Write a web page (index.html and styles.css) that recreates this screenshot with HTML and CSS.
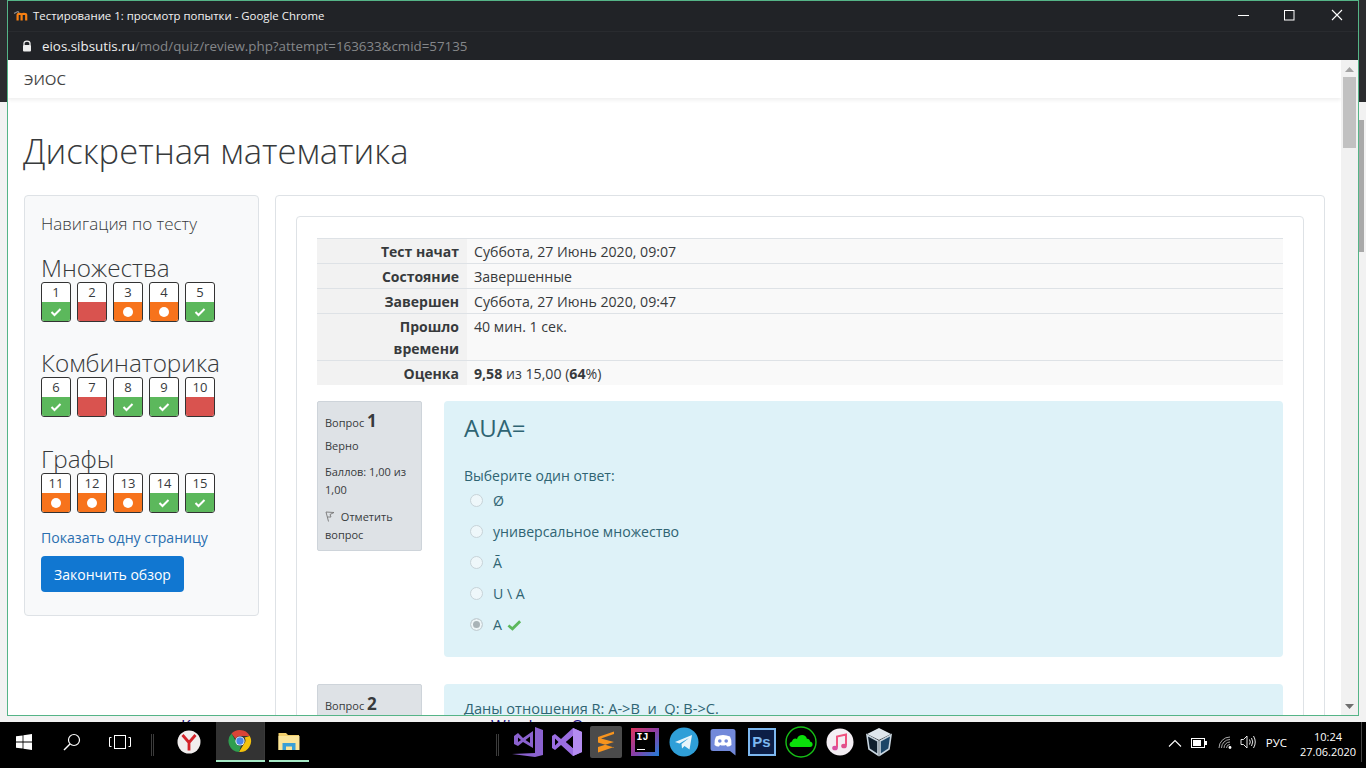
FILE: index.html
```html
<!DOCTYPE html>
<html lang="ru">
<head>
    <meta charset="UTF-8">
    <title>Тестирование 1: просмотр попытки</title>
    <link rel="stylesheet" href="styles.css">
</head>
<body>
    <div class="desktop">
        <div class="behind-right"></div>
        <span class="behind-text behind-k">К</span>
        <span class="behind-text behind-w">Windows О</span>

        <div class="window">
            <div class="titlebar">
                <svg class="moodle-icon" viewBox="0 0 14 10" width="14" height="10">
                    <path d="M0 2.5 L4 0.5 L5 2" fill="none" stroke="#8a8a8a" stroke-width="1.2"/>
                    <path d="M3.6 9.5 V4 C3.6 2.4 7.6 2.4 7.6 4 V9.5 M7.6 4 C7.6 2.4 12.2 2.4 12.2 4 V9.5" fill="none" stroke="#f98012" stroke-width="2.2"/>
                </svg>
                <span class="window-title">Тестирование 1: просмотр попытки - Google Chrome</span>
                <div class="window-controls">
                    <svg viewBox="0 0 46 16" width="46" height="16"><path d="M0 7.5 H11" stroke="#fff" stroke-width="1"/></svg>
                    <svg viewBox="0 0 46 16" width="46" height="16"><rect x="0.5" y="2.5" width="9.5" height="9.5" fill="none" stroke="#fff" stroke-width="1"/></svg>
                    <svg viewBox="0 0 16 16" width="16" height="16"><path d="M2 2 L12 12 M12 2 L2 12" stroke="#fff" stroke-width="1.1"/></svg>
                </div>
            </div>
            <div class="urlbar">
                <svg viewBox="0 0 10 12" width="10" height="12"><path d="M2 5.5 V3.6 C2 0.4 8 0.4 8 3.6 V5.5" fill="none" stroke="#eee" stroke-width="1.3"/><rect x="1" y="5" width="8" height="6.5" rx="1" fill="#eee"/></svg>
                <span class="url"><span class="url-host">eios.sibsutis.ru</span>/mod/quiz/review.php?attempt=163633&amp;cmid=57135</span>
            </div>

            <div class="viewport">
                <div class="page">
                    <div class="navbar">ЭИОС</div>
                    <h1 class="course-title">Дискретная математика</h1>
                    <div class="columns">
                        <div class="nav-block">
                            <div class="nav-title">Навигация по тесту</div>

                            <h3 class="nav-section first">Множества</h3>
                            <div class="nav-row">
                                <div class="qn"><span class="qn-num">1</span><span class="qn-state ok"><svg viewBox="0 0 12 10" width="12" height="10"><path d="M1.5 5 L4.5 8 L10.5 2" fill="none" stroke="#fff" stroke-width="2"/></svg></span></div>
                                <div class="qn"><span class="qn-num">2</span><span class="qn-state bad"></span></div>
                                <div class="qn"><span class="qn-num">3</span><span class="qn-state part"><i class="dot"></i></span></div>
                                <div class="qn"><span class="qn-num">4</span><span class="qn-state part"><i class="dot"></i></span></div>
                                <div class="qn"><span class="qn-num">5</span><span class="qn-state ok"><svg viewBox="0 0 12 10" width="12" height="10"><path d="M1.5 5 L4.5 8 L10.5 2" fill="none" stroke="#fff" stroke-width="2"/></svg></span></div>
                            </div>

                            <h3 class="nav-section">Комбинаторика</h3>
                            <div class="nav-row">
                                <div class="qn"><span class="qn-num">6</span><span class="qn-state ok"><svg viewBox="0 0 12 10" width="12" height="10"><path d="M1.5 5 L4.5 8 L10.5 2" fill="none" stroke="#fff" stroke-width="2"/></svg></span></div>
                                <div class="qn"><span class="qn-num">7</span><span class="qn-state bad"></span></div>
                                <div class="qn"><span class="qn-num">8</span><span class="qn-state ok"><svg viewBox="0 0 12 10" width="12" height="10"><path d="M1.5 5 L4.5 8 L10.5 2" fill="none" stroke="#fff" stroke-width="2"/></svg></span></div>
                                <div class="qn"><span class="qn-num">9</span><span class="qn-state ok"><svg viewBox="0 0 12 10" width="12" height="10"><path d="M1.5 5 L4.5 8 L10.5 2" fill="none" stroke="#fff" stroke-width="2"/></svg></span></div>
                                <div class="qn"><span class="qn-num">10</span><span class="qn-state bad"></span></div>
                            </div>

                            <h3 class="nav-section last">Графы</h3>
                            <div class="nav-row">
                                <div class="qn"><span class="qn-num">11</span><span class="qn-state part"><i class="dot"></i></span></div>
                                <div class="qn"><span class="qn-num">12</span><span class="qn-state part"><i class="dot"></i></span></div>
                                <div class="qn"><span class="qn-num">13</span><span class="qn-state part"><i class="dot"></i></span></div>
                                <div class="qn"><span class="qn-num">14</span><span class="qn-state ok"><svg viewBox="0 0 12 10" width="12" height="10"><path d="M1.5 5 L4.5 8 L10.5 2" fill="none" stroke="#fff" stroke-width="2"/></svg></span></div>
                                <div class="qn"><span class="qn-num">15</span><span class="qn-state ok"><svg viewBox="0 0 12 10" width="12" height="10"><path d="M1.5 5 L4.5 8 L10.5 2" fill="none" stroke="#fff" stroke-width="2"/></svg></span></div>
                            </div>

                            <a class="one-page" href="#">Показать одну страницу</a>
                            <button class="finish-btn" type="button">Закончить обзор</button>
                        </div>

                        <div class="main-block">
                            <div class="review-card">
                                <table class="summary">
                                    <tr><th>Тест начат</th><td>Суббота, 27 Июнь 2020, 09:07</td></tr>
                                    <tr><th>Состояние</th><td>Завершенные</td></tr>
                                    <tr><th>Завершен</th><td>Суббота, 27 Июнь 2020, 09:47</td></tr>
                                    <tr><th>Прошло<br>времени</th><td>40 мин. 1 сек.</td></tr>
                                    <tr><th>Оценка</th><td><b>9,58</b> из 15,00 (<b>64</b>%)</td></tr>
                                </table>

                                <div class="question">
                                    <div class="q-info">
                                        <div class="q-no">Вопрос <b>1</b></div>
                                        <div class="q-line">Верно</div>
                                        <div class="q-line">Баллов: 1,00 из 1,00</div>
                                        <div class="q-line flagged">
                                            <svg class="flag" viewBox="0 0 10 11" width="10" height="11"><path d="M3.5 10.5 L1 1 L9 1.5 L5 3.5 L6 6 L2.5 6" fill="none" stroke="#777" stroke-width="0.9"/></svg>
                                            Отметить вопрос
                                        </div>
                                    </div>
                                    <div class="q-content">
                                        <div class="q-text">AUA=</div>
                                        <div class="q-prompt">Выберите один ответ:</div>
                                        <div class="option"><i class="radio"></i>Ø</div>
                                        <div class="option"><i class="radio"></i>универсальное множество</div>
                                        <div class="option"><i class="radio"></i>Ā</div>
                                        <div class="option"><i class="radio"></i>U \ A</div>
                                        <div class="option"><i class="radio checked"></i>A
                                            <svg class="tick" viewBox="0 0 16 12" width="15" height="12"><path d="M1.5 6.5 L5.8 10 L14 2" fill="none" stroke="#5cb85c" stroke-width="3"/></svg>
                                        </div>
                                    </div>
                                </div>

                                <div class="question">
                                    <div class="q-info">
                                        <div class="q-no">Вопрос <b>2</b></div>
                                    </div>
                                    <div class="q-content short">
                                        <div class="q-relation">Даны отношения R: A-&gt;B &nbsp;и &nbsp;Q: B-&gt;C.</div>
                                    </div>
                                </div>
                            </div>
                        </div>
                    </div>
                </div>
                <div class="scrollbar">
                    <svg class="sb-arrow" viewBox="0 0 9 5" width="9" height="5"><path d="M4.5 0 L9 5 H0 Z" fill="#a3a3a3"/></svg>
                    <div class="sb-thumb"></div>
                    <svg class="sb-arrow sb-down" viewBox="0 0 9 5" width="9" height="5"><path d="M0 0 H9 L4.5 5 Z" fill="#6e6e6e"/></svg>
                </div>
            </div>
        </div>
    </div>

    <div class="taskbar">
        <div class="tb-slot wide">
            <svg viewBox="0 0 16 16" width="16" height="16"><path d="M0 2.3 L6.6 1.4 V7.6 H0 Z M7.4 1.3 L16 0 V7.6 H7.4 Z M0 8.4 H6.6 V14.6 L0 13.7 Z M7.4 8.4 H16 V16 L7.4 14.7 Z" fill="#fff"/></svg>
        </div>
        <div class="tb-slot wide">
            <svg viewBox="0 0 18 18" width="18" height="18"><circle cx="11" cy="7" r="5.5" fill="none" stroke="#fff" stroke-width="1.2"/><path d="M7 11 L1 17" stroke="#fff" stroke-width="1.4"/></svg>
        </div>
        <div class="tb-slot wide">
            <svg viewBox="0 0 22 14" width="22" height="14"><rect x="5.5" y="0.5" width="11" height="13" fill="none" stroke="#fff"/><path d="M2.5 2.5 H0.5 V11.5 H2.5 M19.5 2.5 H21.5 V11.5 H19.5" fill="none" stroke="#fff"/></svg>
        </div>
        <i class="tb-sep first"></i>
        <div class="tb-slot wide">
            <svg viewBox="0 0 24 24" width="24" height="24"><circle cx="12" cy="12" r="11.5" fill="#f1eeee"/><path d="M5.5 5 L12 12.5 L18.5 5 M12 12.5 V20.5" fill="none" stroke="#d3232a" stroke-width="2.8"/></svg>
        </div>
        <div class="tb-slot wide active">
            <svg viewBox="0 0 24 24" width="24" height="24">
                <path d="M12 1 A11 11 0 0 1 21.8 7 L12 7 A5 5 0 0 0 7.5 9.8 L3.5 4.5 A11 11 0 0 1 12 1 Z" fill="#db4437"/>
                <path d="M21.8 7 A11 11 0 0 1 11 23 L16 14.8 A5 5 0 0 0 16.5 8.5 Z" fill="#f4c20d"/>
                <path d="M3.5 4.5 L8 12.5 A5 5 0 0 0 13 17 L11 23 A11 11 0 0 1 3.5 4.5 Z" fill="#2f9e4f"/>
                <circle cx="12" cy="12" r="4.6" fill="#fff"/><circle cx="12" cy="12" r="3.7" fill="#4a85e8"/>
            </svg>
        </div>
        <i class="tb-sliver"></i>
        <div class="tb-slot explorer">
            <svg viewBox="0 0 22 20" width="22" height="20">
                <path d="M0.5 2 H8 L10 4 H21 V19 H0.5 Z" fill="#f2cf6b"/>
                <path d="M0.5 5 H21.5 V19 H0.5 Z" fill="#fbe59a"/>
                <path d="M4.5 12 H17.5 V19 H14 V15.5 H8 V19 H4.5 Z" fill="#3aa0d6"/>
            </svg>
        </div>
        <i class="tb-sep second"></i>
        <div class="tb-slot">
            <svg viewBox="0 0 32 32" width="32" height="32"><path d="M23 1 L31 4 V29 L23 31 L0 28 L23 27 Z" fill="#8b62cf"/><path d="M2 10 L6 7 L11 12 L21 5 V22 L11 16 L6 20 L2 18 Z M6 11.5 V16 L9 14 Z M13.5 14 L18 17 V10.5 Z" fill="#8b62cf" fill-rule="evenodd"/></svg>
        </div>
        <div class="tb-slot">
            <svg viewBox="0 0 32 32" width="32" height="32"><path d="M22 2 L31 6 V26 L22 30 L10 19 L4 24 L1 22 V10 L4 8 L10 13 Z M22 10 L15 16 L22 22 Z M4 12.5 V19.5 L7.5 16 Z" fill="#9a6de0" fill-rule="evenodd"/><path d="M22 2 L31 6 V26 L22 30 Z" fill="#b48cf0"/><path d="M22 10 L15 16 L22 22 Z" fill="#000"/></svg>
        </div>
        <div class="tb-slot">
            <svg viewBox="0 0 32 32" width="32" height="32"><rect width="32" height="32" rx="2" fill="#4b4b4b"/><path d="M24 5.5 L8 11 V16.5 L24 21.5 V16 L11 12.5 L24 8 Z M24 16 V21 L8 26.5 V21 Z" fill="#f7941e"/></svg>
        </div>
        <div class="tb-slot">
            <div class="ij-icon"><div class="ij-inner">IJ<i class="ij-bar"></i></div></div>
        </div>
        <div class="tb-slot">
            <svg viewBox="0 0 30 30" width="30" height="30"><circle cx="15" cy="15" r="14.5" fill="#2f9fd8"/><path d="M6 15 L23 8 L20.5 22.5 L15.5 19 L13 21.5 L12.5 17 L20 11 L10.5 16.5 Z" fill="#e8f4fa"/></svg>
        </div>
        <div class="tb-slot">
            <svg viewBox="0 0 26 28" width="26" height="28"><path d="M3 1 H23 A2.5 2.5 0 0 1 25.5 3.5 V27.5 L20 23 H3 A2.5 2.5 0 0 1 0.5 20.5 V3.5 A2.5 2.5 0 0 1 3 1 Z" fill="#7289da"/><path d="M6 8.5 Q13 5.5 20 8.5 Q22 12 21.5 17 Q19 19 17 18.5 L16 17 Q13 18 10 17 L9 18.5 Q7 19 4.5 17 Q4 12 6 8.5 Z" fill="#fff"/><circle cx="9.8" cy="13" r="1.8" fill="#7289da"/><circle cx="16.2" cy="13" r="1.8" fill="#7289da"/></svg>
        </div>
        <div class="tb-slot">
            <div class="ps-icon">Ps</div>
        </div>
        <div class="tb-slot">
            <svg viewBox="0 0 32 32" width="32" height="32"><circle cx="16" cy="16" r="15" fill="#000" stroke="#16c116" stroke-width="1.4"/><path d="M7 21 C4 21 3.5 16.5 7 15.5 C7.5 12 11 12 12 13 C13 8 21 7.5 22 13 C23 12.5 25 13.5 25 15.5 C28.5 16 28.5 21 25 21 Z" fill="#0be00b"/></svg>
        </div>
        <div class="tb-slot">
            <svg viewBox="0 0 28 28" width="28" height="28"><circle cx="14" cy="14" r="13.5" fill="#f3eef3"/><path d="M11 19.5 V8.5 L20 6.5 V17.5" fill="none" stroke="#f0527f" stroke-width="2"/><ellipse cx="9" cy="20" rx="2.8" ry="2.3" fill="#d94fa0"/><ellipse cx="18" cy="18" rx="2.8" ry="2.3" fill="#e0508c"/></svg>
        </div>
        <div class="tb-slot">
            <svg viewBox="0 0 28 30" width="28" height="30"><path d="M14 1 L26 7 L14 13 L2 7 Z" fill="#dfe6ec"/><path d="M2 8 L13 14 V28 L4 22 Z" fill="#10202e" stroke="#c9d6e0" stroke-width="1.6"/><path d="M26 8 L15 14 V28 L24 22 Z" fill="#1c4668" stroke="#c9d6e0" stroke-width="1.6"/></svg>
        </div>

        <div class="tray">
            <svg class="tray-chevron" viewBox="0 0 14 8" width="14" height="8"><path d="M1 7.5 L7 1.5 L13 7.5" fill="none" stroke="#fff" stroke-width="1.1"/></svg>
            <svg class="tray-battery" viewBox="0 0 16 10" width="16" height="10"><rect x="0.5" y="0.5" width="13" height="9" fill="none" stroke="#fff"/><rect x="2" y="2" width="8" height="6" fill="#fff"/><rect x="14" y="3" width="2" height="4" fill="#fff"/></svg>
            <svg class="tray-wifi" viewBox="0 0 14 13" width="14" height="13"><path d="M1 12 A11 11 0 0 1 12 1 M3.5 12 A8.5 8.5 0 0 1 12 3.5 M6 12 A6 6 0 0 1 12 6 M8.5 12 A3.5 3.5 0 0 1 12 8.5" fill="none" stroke="#bbb" stroke-width="0.9"/><circle cx="12" cy="11.5" r="1.4" fill="#fff"/></svg>
            <svg class="tray-sound" viewBox="0 0 17 14" width="17" height="14"><path d="M1 4.5 H3.5 L7 1 V13 L3.5 9.5 H1 Z" fill="none" stroke="#fff" stroke-width="0.9"/><path d="M9.5 4.5 Q11 7 9.5 9.5 M11.5 3 Q14 7 11.5 11 M13.5 1 Q17 7 13.5 13" fill="none" stroke="#fff" stroke-width="0.9"/></svg>
            <span class="tray-lang">РУС</span>
            <div class="tray-clock"><span>10:24</span><span>27.06.2020</span></div>
            <i class="tray-edge"></i>
        </div>
    </div>
</body>
</html>
```

FILE: styles.css
```css
* {
    box-sizing: border-box;
}
html, body {
    margin: 0;
    height: 100%;
    overflow: hidden;
}
body {
    font-family: "Open Sans", Arial, sans-serif;
    background-color: #000;
    display: flex;
    flex-direction: column;
}

/* desktop behind the chrome window */
.desktop {
    position: relative;
    height: 722px;
    background: linear-gradient(#2b2c2f 0, #2b2c2f 102px, #f2f2f2 102px);
    overflow: hidden;
}
.behind-right {
    position: absolute;
    right: 2px;
    top: 120px;
    width: 5px;
    height: 132px;
    background-color: #a9a9a9;
}
.behind-text {
    position: absolute;
    top: 719px;
    font-size: 16px;
    line-height: 14px;
    color: #1a0d80;
}
.behind-k {
    left: 181px;
}
.behind-w {
    left: 491px;
    letter-spacing: 1px;
}
.window {
    position: absolute;
    left: 7px;
    top: 0;
    width: 1352px;
    height: 716px;
    border: 1px solid #55b487;
    display: flex;
    flex-direction: column;
    background-color: #fff;
}
.titlebar {
    height: 30px;
    background-color: #212327;
    display: flex;
    align-items: center;
    padding-left: 6px;
    flex-shrink: 0;
}
.moodle-icon {
    margin-right: 5px;
}
.window-title {
    color: #f2f2f2;
    font-size: 11.4px;
    margin-top: -2px;
}
.window-controls {
    margin-left: auto;
    display: flex;
    align-items: center;
    padding-right: 12px;
}
.urlbar {
    height: 29px;
    background-color: #212327;
    border-top: 1px solid #292b2f;
    display: flex;
    align-items: center;
    padding-left: 14px;
    flex-shrink: 0;
}
.url {
    margin-left: 10px;
    font-size: 13.35px;
    color: #85878a;
    margin-top: -1px;
}
.url-host {
    color: #eeeeee;
}
.viewport {
    flex: 1;
    display: flex;
    min-height: 0;
}
.page {
    flex: 1;
    min-width: 0;
    overflow: hidden;
}

/* scrollbar */
.scrollbar {
    width: 17px;
    background-color: #f1f1f1;
    display: flex;
    flex-direction: column;
    align-items: center;
    flex-shrink: 0;
    position: relative;
}
.sb-arrow {
    margin-top: 7px;
}
.sb-thumb {
    width: 13px;
    height: 71px;
    margin-top: 5px;
    background-color: #c1c1c1;
}
.sb-down {
    margin-top: auto;
    margin-bottom: 6px;
}

/* page */
.navbar {
    height: 38px;
    padding-left: 16px;
    font-size: 15px;
    line-height: 38px;
    color: #444;
    background-color: #fff;
    box-shadow: 0 2px 4px rgba(0, 0, 0, 0.07);
}
.course-title {
    margin: 31px 0 0 15px;
    font-size: 34.6px;
    line-height: 44px;
    font-weight: 300;
    color: #373a3c;
}
.columns {
    display: flex;
    align-items: flex-start;
    gap: 16px;
    padding: 0 16px;
    margin-top: 22px;
}
.nav-block {
    width: 235px;
    flex-shrink: 0;
    height: 421px;
    padding: 16px 16px 0;
    background-color: #f8f9fa;
    border: 1px solid #dee2e6;
    border-radius: 4px;
}
.nav-title {
    font-size: 17px;
    font-weight: 300;
    line-height: 24px;
    color: #373a3c;
}
.nav-section {
    margin: 30px 0 0;
    font-size: 24.3px;
    font-weight: 300;
    line-height: 22px;
    color: #373a3c;
    height: 25px;
    white-space: nowrap;
}
.nav-section.first {
    margin-top: 21px;
}
.nav-section.last {
    margin-top: 31px;
}
.nav-row {
    display: flex;
    gap: 6px;
    position: relative;
}
.qn {
    width: 30px;
    height: 40px;
    border: 1px solid #333;
    border-radius: 3px;
    background-color: #fff;
    display: flex;
    flex-direction: column;
    overflow: hidden;
}
.qn-num {
    height: 19px;
    font-size: 13px;
    line-height: 18px;
    text-align: center;
    color: #373a3c;
}
.qn-state {
    flex: 1;
    display: flex;
    align-items: center;
    justify-content: center;
}
.qn-state.ok {
    background-color: #5cb85c;
}
.qn-state.bad {
    background-color: #d9534f;
}
.qn-state.part {
    background-color: #f7731c;
}
.dot {
    width: 10px;
    height: 10px;
    border-radius: 50%;
    background-color: #fff;
}
.one-page {
    display: block;
    margin-top: 14px;
    font-size: 14.1px;
    line-height: 22px;
    color: #2a6fb0;
    text-decoration: none;
}
.finish-btn {
    display: block;
    margin-top: 7px;
    width: 143px;
    height: 36px;
    padding: 0;
    border: none;
    border-radius: 4px;
    background-color: #1177d1;
    color: #fff;
    font-family: inherit;
    font-size: 14px;
}

/* main column */
.main-block {
    flex: 1;
    min-width: 0;
    height: 800px;
    padding: 20px 20px 0;
    border: 1px solid #dee2e6;
    border-radius: 4px;
}
.review-card {
    height: 800px;
    padding: 21px 20px 0;
    border: 1px solid #dee2e6;
    border-radius: 4px;
}
.summary {
    width: 100%;
    border-collapse: collapse;
    font-size: 14px;
    line-height: 22px;
    color: #373a3c;
}
.summary th, .summary td {
    padding: 2px 7px 0;
    border-top: 1px solid #dee2e6;
    vertical-align: top;
}
.summary th {
    width: 150px;
    padding-right: 8px;
    text-align: right;
    font-weight: 700;
    background-color: #f2f2f2;
}
.summary td {
    font-size: 14.15px;
    background-color: #f9f9f9;
}
.question {
    display: flex;
    align-items: flex-start;
    gap: 22px;
    margin-top: 16px;
    margin-bottom: 27px;
}
.q-info {
    width: 105px;
    flex-shrink: 0;
    height: 150px;
    padding: 10px 7px 0;
    background-color: #dee2e6;
    border: 1px solid #ced4da;
    border-radius: 2px;
    font-size: 11px;
    line-height: 18px;
    color: #373a3c;
}
.q-no b {
    font-size: 17px;
}
.q-no {
    height: 17px;
}
.q-line {
    margin-top: 8px;
}
.q-line.flagged {
    margin-top: 9px;
}
.flag {
    margin-right: 3px;
    vertical-align: -1px;
}
.q-content {
    flex: 1;
    min-width: 0;
    height: 256px;
    padding: 11px 20px 0;
    background-color: #def2f8;
    border-radius: 4px;
    color: #2f6473;
    font-size: 14.15px;
}
.q-content.short {
    padding-top: 14px;
}
.q-text {
    font-size: 24px;
    line-height: 32px;
}
.q-prompt {
    margin-top: 21px;
    font-size: 14px;
    line-height: 22px;
}
.option {
    height: 31px;
    line-height: 31px;
    display: flex;
    align-items: center;
}
.q-prompt + .option {
    margin-top: -2px;
}
.radio {
    width: 13px;
    height: 13px;
    margin: 0 10px 0 6px;
    border-radius: 50%;
    background-color: #eef7fa;
    border: 1px solid #c7d3d8;
}
.radio.checked {
    background-color: #a9b3b7;
    box-shadow: inset 0 0 0 2px #eef5f7;
}
.tick {
    margin-left: 5px;
}
.q-relation {
    font-size: 14.6px;
    line-height: 20px;
}

/* taskbar */
.taskbar {
    height: 46px;
    background-color: #000;
    display: flex;
    padding-bottom: 6px;
    color: #fff;
}
.tb-slot {
    width: 39px;
    height: 40px;
    display: flex;
    align-items: center;
    justify-content: center;
    flex-shrink: 0;
}
.tb-slot.wide {
    width: 48px;
}
.tb-slot.active {
    margin-left: 3px;
    background-color: #333;
    border-bottom: 2px solid #a5e8c5;
}
.tb-sliver {
    width: 1px;
    height: 40px;
    margin-right: 4px;
    background-color: #3a3a3a;
    border-bottom: 2px solid #a5e8c5;
}
.tb-slot.explorer {
    width: 40px;
    border-bottom: 2px solid #a5e8c5;
}
.tb-sep {
    width: 3px;
    height: 22px;
    margin-top: 12px;
    border-left: 1px solid #3c3c3c;
    border-right: 1px solid #3c3c3c;
}
.tb-sep.first {
    margin-left: 7px;
    margin-right: 11px;
}
.tb-sep.second {
    margin-left: 187px;
    margin-right: 9px;
}
.ij-icon {
    width: 28px;
    height: 28px;
    padding: 4px;
    background: linear-gradient(135deg, #e0345c, #8c3ea6 50%, #1f7fd8);
}
.ij-inner {
    width: 20px;
    height: 20px;
    background-color: #000;
    color: #fff;
    font-family: "Liberation Mono", monospace;
    font-weight: 700;
    font-size: 10px;
    line-height: 11px;
    padding-left: 2px;
    position: relative;
}
.ij-bar {
    position: absolute;
    left: 2px;
    bottom: 2px;
    width: 8px;
    height: 1px;
    background-color: #fff;
}
.ps-icon {
    width: 28px;
    height: 28px;
    border: 2px solid #7db8f0;
    background-color: #0c1e46;
    color: #7db8f0;
    font-family: "Liberation Sans", sans-serif;
    font-weight: 700;
    font-size: 15px;
    line-height: 24px;
    text-align: center;
}
.tray {
    flex: 1;
    display: flex;
    align-items: center;
    justify-content: flex-end;
    height: 40px;
    position: relative;
    font-size: 12px;
}
.tray-chevron {
    margin-right: 9px;
    margin-top: 2px;
}
.tray-battery {
    margin-right: 11px;
    margin-top: 1px;
}
.tray-wifi {
    margin-right: 8px;
}
.tray-sound {
    margin-right: 9px;
}
.tray-lang {
    margin-right: 13px;
    font-size: 11.5px;
}
.tray-clock {
    width: 56px;
    margin-right: 5px;
    display: flex;
    flex-direction: column;
    align-items: center;
    font-size: 11px;
    line-height: 15px;
    margin-top: 3px;
}
.tray-edge {
    width: 1px;
    height: 40px;
    background-color: #444;
    margin-right: 4px;
}
```
